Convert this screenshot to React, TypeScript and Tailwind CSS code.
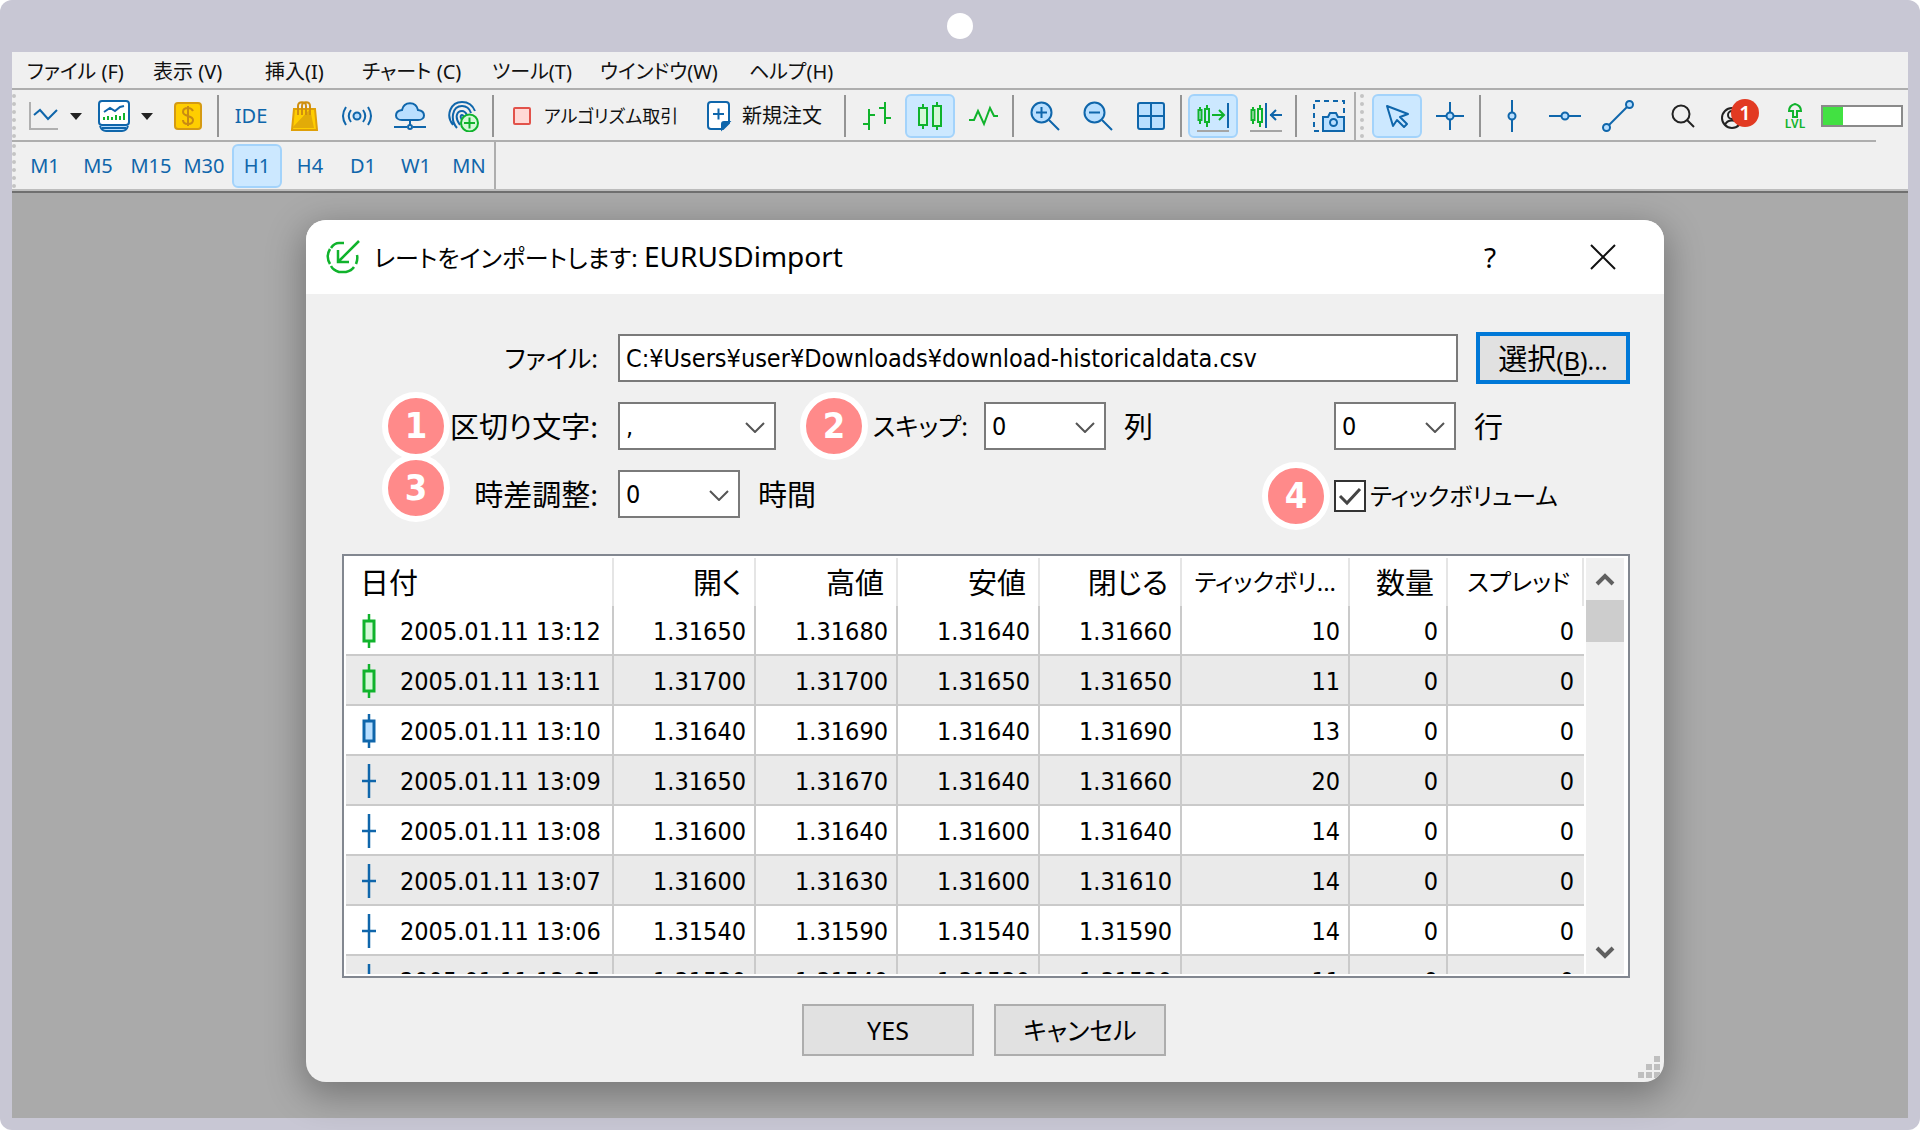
import type { ReactNode } from "react";

const BLUE = "#0f66ab";
const GREEN = "#10b32c";

type Candle = "up" | "down" | "doji";

interface Rate {
    date: string;
    open: string;
    high: string;
    low: string;
    close: string;
    tick: number;
    candle: Candle;
}

const menus = ["ファイル (F)", "表示 (V)", "挿入(I)", "チャート (C)", "ツール(T)", "ウインドウ(W)", "ヘルプ(H)"];

const periods = ["M1", "M5", "M15", "M30", "H1", "H4", "D1", "W1", "MN"];

const rates: Rate[] = [
    { date: "2005.01.11 13:12", open: "1.31650", high: "1.31680", low: "1.31640", close: "1.31660", tick: 10, candle: "up" },
    { date: "2005.01.11 13:11", open: "1.31700", high: "1.31700", low: "1.31650", close: "1.31650", tick: 11, candle: "up" },
    { date: "2005.01.11 13:10", open: "1.31640", high: "1.31690", low: "1.31640", close: "1.31690", tick: 13, candle: "down" },
    { date: "2005.01.11 13:09", open: "1.31650", high: "1.31670", low: "1.31640", close: "1.31660", tick: 20, candle: "doji" },
    { date: "2005.01.11 13:08", open: "1.31600", high: "1.31640", low: "1.31600", close: "1.31640", tick: 14, candle: "doji" },
    { date: "2005.01.11 13:07", open: "1.31600", high: "1.31630", low: "1.31600", close: "1.31610", tick: 14, candle: "doji" },
    { date: "2005.01.11 13:06", open: "1.31540", high: "1.31590", low: "1.31540", close: "1.31590", tick: 14, candle: "doji" },
    { date: "2005.01.11 13:05", open: "1.31530", high: "1.31540", low: "1.31530", close: "1.31530", tick: 11, candle: "doji" },
];

const Icon = ({ children }: { children: ReactNode }) => (
    <svg className="h-8 w-8 shrink-0" viewBox="0 0 32 32" fill="none" stroke={BLUE} strokeWidth="2" aria-hidden="true">
        {children}
    </svg>
);

const ToolButton = ({ label, active, children }: { label: string; active?: boolean; children: ReactNode }) => (
    <button
        type="button"
        aria-label={label}
        className={
            active
                ? "flex h-11 w-[50px] shrink-0 items-center justify-center rounded-md border-2 border-[#a3d3fb] bg-[#cce8ff]"
                : "flex h-11 w-[50px] shrink-0 items-center justify-center"
        }
    >
        {children}
    </button>
);

const Separator = () => <div className="mx-1 h-[42px] w-[2px] shrink-0 bg-[#949494]" />;

const Grip = () => <div className="h-11 w-0 shrink-0 border-l-4 border-dotted border-[#c4c4c4]" />;

const Triangle = () => (
    <svg className="h-[7px] w-3 shrink-0" viewBox="0 0 12 7" fill="#222" aria-hidden="true">
        <path d="M0 0h12L6 7z" />
    </svg>
);

const MiniCandles = () => (
    <g stroke={GREEN}>
        <path d="M3 7v3M3 20v4M10 5v4M10 22v5" />
        <rect x="1.5" y="10" width="3" height="10" />
        <rect x="8" y="9" width="4" height="13" />
    </g>
);

const MenuBar = () => (
    <nav className="grid h-[38px] grid-cols-[126px_112px_97px_130px_108px_149px_auto] items-center border-b-2 border-[#aeaeae] pt-1 pl-[15px] text-xl text-[#111]">
        {menus.map((m) => (
            <a key={m} href="#" className="whitespace-nowrap">
                {m}
            </a>
        ))}
    </nav>
);

const Toolbar = () => (
    <div className="mt-[2px] flex h-12 items-center">
        <Grip />
        <button type="button" aria-label="チャート作成" className="ml-[11px] flex items-center gap-[11px]">
            <Icon>
                <path d="M3 2v27h28" stroke="#b0b0b0" />
                <path d="M7 15l6-5 8 9 9-9" />
            </Icon>
            <Triangle />
        </button>
        <button type="button" aria-label="プロファイル" className="ml-4 flex items-center gap-[11px]">
            <Icon>
                <rect x="1" y="1" width="30" height="24" rx="3" fill="#fff" />
                <path d="M6 12l6-4 5 3 5-4 4-1" />
                <path d="M6 20v-3M10 20v-4M14 20v-3M18 20v-5M22 20v-4M26 20v-7" stroke={GREEN} />
                <path d="M2 26c1 3 3 5 6 5h16c3 0 5-2 6-5" fill="#b9dfff" />
                <path d="M4 28h24" />
            </Icon>
            <Triangle />
        </button>
        <div className="w-[10px]" />
        <ToolButton label="銘柄">
            <Icon>
                <rect x="3" y="3" width="26" height="26" rx="3" fill="#ffce00" stroke="#d59a12" />
                <path d="M21 11c-1-2-3-3-5-3-3 0-5 1-5 4 0 5 10 3 10 8 0 3-2 4-5 4-3 0-5-1-5-4M16 6v20" stroke="#c98b12" />
            </Icon>
        </ToolButton>
        <Separator />
        <div className="flex shrink-0 gap-[3px] pl-[3px]">
            <ToolButton label="IDE">
                <span className="text-xl text-[#0f66ab]">IDE</span>
            </ToolButton>
            <ToolButton label="マーケット">
                <Icon>
                    <path d="M6 9h21l2 21H4z" fill="#ffce00" stroke="#dfa008" />
                    <path d="M22 9l4 19H4z" fill="#e2ab08" stroke="none" />
                    <path d="M10 15V6c0-5 8-5 8 0v9M14 15V6c0-5 8-5 8 0v9" stroke="#cf8f10" />
                </Icon>
            </ToolButton>
            <ToolButton label="シグナル">
                <Icon>
                    <circle cx="16" cy="16" r="3.5" fill="#b9dfff" />
                    <path d="M10 10c-3 4-3 8 0 12M22 10c3 4 3 8 0 12M5 7c-4 6-4 12 0 18M27 7c4 6 4 12 0 18" />
                </Icon>
            </ToolButton>
            <ToolButton label="VPS">
                <Icon>
                    <path d="M8 20c-8 0-8-9 0-10C10 1 22 1 24 10c8 1 8 10 0 10z" fill="#b9dfff" />
                    <path d="M16 20v5M0 27h13M19 27h13" />
                    <circle cx="16" cy="27" r="2" />
                </Icon>
            </ToolButton>
            <ToolButton label="コミュニティ">
                <Icon>
                    <path d="M6 25C-2 15 4 2 15 2c7 0 11 4 13 9M10 28C3 20 5 6 15 6c6 0 8 4 9 7M13 25c-6-8-3-14 2-14 3 0 4 2 5 4" />
                    <path d="M17 22c-4-3-4-7-2-7s1 2 3 3" />
                    <circle cx="22.5" cy="23" r="8.5" fill="#d5f8d8" stroke={GREEN} />
                    <path d="M17 23h11M22.5 17.5v11" stroke={GREEN} />
                </Icon>
            </ToolButton>
        </div>
        <Separator />
        <button type="button" className="flex h-11 w-[196px] shrink-0 items-center gap-[13px] pl-[15px] text-lg whitespace-nowrap text-[#111]">
            <span className="h-[18px] w-[18px] shrink-0 rounded-xs border-2 border-[#e2524a] bg-[#ffd9d6]" />
            アルゴリズム取引
        </button>
        <button type="button" className="flex h-11 w-[146px] shrink-0 items-center gap-[7px] pl-[9px] text-xl whitespace-nowrap text-[#111]">
            <Icon>
                <path d="M8 2h15c2 0 3 1 3 3v18l-6 6H8c-2 0-3-1-3-3V5c0-2 1-3 3-3z" fill="#fff" />
                <path d="M26 22l-7 7v-5c0-1 1-2 2-2z" fill={BLUE} />
                <path d="M10 14h11M15.5 8.5v11" />
            </Icon>
            新規注文
        </button>
        <Separator />
        <div className="flex shrink-0 gap-[3px] pl-[2px]">
            <ToolButton label="バーチャート">
                <Icon>
                    <path d="M2 24h6M8 9v21M8 15h6M18 8h6M24 2v22M24 18h6" stroke={GREEN} />
                </Icon>
            </ToolButton>
            <ToolButton label="ローソク足" active>
                <Icon>
                    <g stroke={GREEN} fill="#d5f8d8">
                        <path d="M9 4v4M9 24v5M23 2v4M23 26v4" />
                        <rect x="5" y="8" width="8" height="17" />
                        <rect x="19" y="6" width="8" height="20" />
                    </g>
                </Icon>
            </ToolButton>
            <ToolButton label="ラインチャート">
                <Icon>
                    <path d="M2 20h5l4-9 6 13 6-16 4 8h4" stroke={GREEN} />
                </Icon>
            </ToolButton>
        </div>
        <Separator />
        <div className="flex shrink-0 gap-[3px] pl-[2px]">
            <ToolButton label="ズームイン">
                <Icon>
                    <circle cx="12.5" cy="12.5" r="10" fill="#b9dfff" />
                    <path d="M20 20l10 10M7 12.5h11M12.5 7v11" />
                </Icon>
            </ToolButton>
            <ToolButton label="ズームアウト">
                <Icon>
                    <circle cx="12.5" cy="12.5" r="10" fill="#b9dfff" />
                    <path d="M20 20l10 10M7 12.5h11" />
                </Icon>
            </ToolButton>
            <ToolButton label="ウィンドウの整列">
                <Icon>
                    <rect x="3" y="3" width="26" height="26" rx="2" fill="#b9dfff" />
                    <path d="M16 3v26M3 16h26" />
                </Icon>
            </ToolButton>
        </div>
        <Separator />
        <div className="flex shrink-0 gap-[3px] pl-[2px]">
            <ToolButton label="自動スクロール" active>
                <Icon>
                    <MiniCandles />
                    <path d="M15 15h12M22 10l5 5-5 5" stroke={GREEN} />
                    <path d="M31 3v25" />
                    <path d="M0 31h32" stroke="#a5a5a5" />
                </Icon>
            </ToolButton>
            <ToolButton label="チャートシフト">
                <Icon>
                    <MiniCandles />
                    <path d="M16 3v25M20 15h12M26 10l-5 5 5 5" />
                    <path d="M0 31h32" stroke="#a5a5a5" />
                </Icon>
            </ToolButton>
        </div>
        <Separator />
        <div className="flex shrink-0 pl-[3px]">
            <ToolButton label="スクリーンショット">
                <Icon>
                    <path d="M6 31H1V1h30v13" strokeDasharray="5 4" />
                    <path d="M10 17h5l2-4h6l2 4h6v14H10z" fill="#b9dfff" />
                    <circle cx="20.5" cy="22.5" r="3.5" />
                </Icon>
            </ToolButton>
        </div>
        <div className="h-12 w-[2px] shrink-0 bg-[#aeaeae]" />
        <div className="mx-1 flex">
            <Grip />
        </div>
        <div className="flex shrink-0 gap-[3px] pl-1">
            <ToolButton label="カーソル" active>
                <Icon>
                    <path d="M6 6l6 20 4-6 7 7 3-3-7-7 8-3z" fill="#cce8ff" strokeLinejoin="round" />
                </Icon>
            </ToolButton>
            <ToolButton label="十字カーソル">
                <Icon>
                    <path d="M2 16h10M20 16h10M16 2v10M16 20v10" />
                    <circle cx="16" cy="16" r="3.5" fill="#b9dfff" />
                </Icon>
            </ToolButton>
        </div>
        <Separator />
        <div className="flex shrink-0 gap-[3px] pl-[2px]">
            <ToolButton label="垂直線">
                <Icon>
                    <path d="M16 0v12M16 20v12" />
                    <circle cx="16" cy="16" r="3.5" fill="#b9dfff" />
                </Icon>
            </ToolButton>
            <ToolButton label="水平線">
                <Icon>
                    <path d="M0 16h12M20 16h12" />
                    <circle cx="16" cy="16" r="3.5" fill="#b9dfff" />
                </Icon>
            </ToolButton>
            <ToolButton label="トレンドライン">
                <Icon>
                    <path d="M7 25L25 7" />
                    <circle cx="4.5" cy="27.5" r="3.5" fill="#b9dfff" />
                    <circle cx="27.5" cy="4.5" r="3.5" fill="#b9dfff" />
                </Icon>
            </ToolButton>
        </div>
        <div className="ml-auto flex shrink-0 items-center pr-[5px]">
            <button type="button" aria-label="検索">
                <svg className="h-6 w-6" viewBox="0 0 24 24" fill="none" stroke="#222" strokeWidth="2" aria-hidden="true">
                    <circle cx="10" cy="10" r="8.5" />
                    <path d="M16 16l7 7" />
                </svg>
            </button>
            <button type="button" aria-label="アカウント" className="relative ml-6 h-8 w-10">
                <svg className="mt-1 h-6 w-6" viewBox="0 0 24 24" fill="none" stroke="#222" strokeWidth="2" aria-hidden="true">
                    <circle cx="13" cy="12" r="10" />
                    <circle cx="13" cy="9" r="4" />
                    <path d="M6 19c2-6 12-6 14 0" />
                </svg>
                <span className="absolute -top-px right-0 flex h-7 w-7 items-center justify-center rounded-full bg-[#e23a22] text-xl leading-none font-semibold text-white">
                    1
                </span>
            </button>
            <div className="ml-6 flex w-6 flex-col items-center text-xs leading-3 font-semibold text-[#10b32c]">
                <svg className="h-[15px] w-4" viewBox="0 0 16 15" fill="none" stroke={GREEN} strokeWidth="2" aria-hidden="true">
                    <path d="M6 14V8H2c0-3 2-6 6-7 4 1 6 4 6 7h-4v6z" />
                </svg>
                LVL
            </div>
            <div className="ml-[14px] h-[22px] w-[82px] border-2 border-[#8a8a8a] bg-white">
                <div className="h-full w-1/4 bg-[#42e142]" />
            </div>
        </div>
    </div>
);

const PeriodBar = () => (
    <div className="flex h-[47px] items-center">
        <Grip />
        <div className="flex gap-[3px] pt-px pl-1">
            {periods.map((p) => (
                <button
                    key={p}
                    type="button"
                    className={
                        p === "H1"
                            ? "h-11 w-[50px] rounded-md border-2 border-[#a3d3fb] bg-[#cce8ff] text-xl text-[#0f66ab]"
                            : "h-11 w-[50px] text-xl text-[#0f66ab]"
                    }
                >
                    {p}
                </button>
            ))}
        </div>
        <div className="h-full w-[2px] bg-[#aeaeae]" />
    </div>
);

const Marker = ({ n, className }: { n: number; className: string }) => (
    <span
        className={`absolute flex h-[68px] w-[68px] items-center justify-center rounded-full border-[6px] border-white bg-[#ff8a8a] font-['DejaVu_Sans_Condensed'] text-4xl leading-none font-bold text-white ${className}`}
    >
        {n}
    </span>
);

const Select = ({ id, value, wide, label }: { id: string; value: string; wide?: boolean; label?: string }) => (
    <div className={wide ? "relative w-[158px] shrink-0" : "relative w-[122px] shrink-0"}>
        <select
            id={id}
            aria-label={label}
            className="block h-12 w-full appearance-none border-2 border-[#7a7a7a] bg-white px-[6px] font-['DejaVu_Sans_Condensed'] text-[25px]"
        >
            <option>{value}</option>
        </select>
        <svg
            className="pointer-events-none absolute top-5 right-[11px] h-[11px] w-5"
            viewBox="0 0 20 11"
            fill="none"
            stroke="#555"
            strokeWidth="2"
            aria-hidden="true"
        >
            <path d="M1 1l9 9 9-9" />
        </svg>
    </div>
);

const ImportForm = () => (
    <div className="flex flex-col gap-5">
        <div className="flex h-12 items-center">
            <label htmlFor="file" className="w-64 shrink-0 text-right text-[25px]">
                ファイル:
            </label>
            <input
                id="file"
                type="text"
                defaultValue="C:¥Users¥user¥Downloads¥download-historicaldata.csv"
                className="ml-5 h-12 min-w-0 flex-1 border-2 border-[#7a7a7a] bg-white px-[6px] font-['DejaVu_Sans_Condensed','Noto_Sans_CJK_JP',sans-serif] text-[25px]"
            />
            <button type="button" className="ml-[18px] h-[52px] w-[154px] shrink-0 border-4 border-[#0078d7] bg-[#e1e1e1]">
                選択
                <span className="text-[25px]">
                    (<u className="underline-offset-4">B</u>)...
                </span>
            </button>
        </div>

        <div className="relative flex h-12 items-center">
            <Marker n={1} className="-top-[10px] left-10" />
            <label htmlFor="delimiter" className="w-64 shrink-0 text-right">
                区切り文字:
            </label>
            <div className="ml-5">
                <Select id="delimiter" value="," wide />
            </div>
            <div className="relative ml-6 flex h-12 w-[168px] items-center justify-end">
                <Marker n={2} className="-top-[10px] left-0" />
                <label htmlFor="skip-columns" className="text-[25px]">
                    スキップ:
                </label>
            </div>
            <div className="ml-4 flex items-center gap-[18px]">
                <Select id="skip-columns" value="0" />
                <span>列</span>
            </div>
            <div className="ml-auto flex w-[296px] items-center gap-[18px]">
                <Select id="skip-rows" value="0" label="スキップ 行" />
                <span>行</span>
            </div>
        </div>

        <div className="relative flex h-12 items-center">
            <Marker n={3} className="-top-4 left-10" />
            <label htmlFor="shift" className="w-64 shrink-0 text-right">
                時差調整:
            </label>
            <div className="ml-5 flex items-center gap-[18px]">
                <Select id="shift" value="0" />
                <span>時間</span>
            </div>
            <div className="relative ml-auto flex h-12 w-[296px] items-center gap-1 pt-1">
                <Marker n={4} className="-top-2 right-full mr-1" />
                <span className="relative h-8 w-8 shrink-0">
                    <input id="tick-volume" type="checkbox" defaultChecked className="block h-8 w-8 appearance-none border-2 border-[#333] bg-white" />
                    <svg
                        className="pointer-events-none absolute top-0 left-0 h-8 w-8"
                        viewBox="0 0 32 32"
                        fill="none"
                        stroke="#444"
                        strokeWidth="3"
                        aria-hidden="true"
                    >
                        <path d="M6 16l7 7L26 9" />
                    </svg>
                </span>
                <label htmlFor="tick-volume" className="text-2xl whitespace-nowrap">
                    ティックボリューム
                </label>
            </div>
        </div>
    </div>
);

const CandleIcon = ({ type }: { type: Candle }) => {
    const color = type === "up" ? GREEN : BLUE;
    return (
        <svg className="h-[34px] w-[14px]" viewBox="0 0 14 34" stroke={color} strokeWidth="2.5" fill={type === "up" ? "#d5f8d8" : "#b9dfff"} aria-hidden="true">
            <path d="M7 0v34" />
            {type === "doji" ? <path d="M0 17h14" /> : <rect x="2" y="7" width="10" height="20" strokeWidth="3" />}
        </svg>
    );
};

const RateTable = () => (
    <div className="mt-9 flex h-[424px] border-2 border-[#828790] bg-white p-[2px]">
        <div className="min-w-0 flex-1 overflow-hidden">
            <table className="w-full table-fixed border-separate border-spacing-0">
                <colgroup>
                    <col />
                    <col className="w-[142px]" />
                    <col className="w-[142px]" />
                    <col className="w-[142px]" />
                    <col className="w-[142px]" />
                    <col className="w-[168px]" />
                    <col className="w-[98px]" />
                    <col className="w-[136px]" />
                </colgroup>
                <thead>
                    <tr className="h-12 text-right [&>th]:border-r-2 [&>th]:border-[#e5e5e5] [&>th]:pr-3 [&>th]:font-normal [&>th]:whitespace-nowrap">
                        <th className="pl-[14px] text-left">日付</th>
                        <th>開く</th>
                        <th>高値</th>
                        <th>安値</th>
                        <th>閉じる</th>
                        <th className="text-2xl">ティックボリ...</th>
                        <th>数量</th>
                        <th className="text-2xl">スプレッド</th>
                    </tr>
                </thead>
                <tbody className="font-['DejaVu_Sans_Condensed'] text-[25px] leading-none">
                    {rates.map((r) => (
                        <tr
                            key={r.date}
                            className="h-[50px] text-right even:bg-[#eaeaea] [&>td]:border-r-2 [&>td]:border-b-2 [&>td]:border-[#cacaca] [&>td]:px-2 [&>td]:pt-[2px] [&>td:last-child]:border-r-0 [&>td:last-child]:pr-[10px]"
                        >
                            <td>
                                <div className="flex items-center gap-6 pl-2 whitespace-nowrap">
                                    <CandleIcon type={r.candle} />
                                    {r.date}
                                </div>
                            </td>
                            <td>{r.open}</td>
                            <td>{r.high}</td>
                            <td>{r.low}</td>
                            <td>{r.close}</td>
                            <td>{r.tick}</td>
                            <td>0</td>
                            <td>0</td>
                        </tr>
                    ))}
                </tbody>
            </table>
        </div>
        {/* scrollbar */}
        <div className="mx-[2px] flex w-[38px] flex-col items-center bg-[#f0f0f0]">
            <button type="button" aria-label="上へスクロール" className="flex h-[42px] w-full shrink-0 items-center justify-center">
                <svg className="h-4 w-5" viewBox="0 0 20 16" fill="none" stroke="#606060" strokeWidth="4" aria-hidden="true">
                    <path d="M2 13l8-8 8 8" />
                </svg>
            </button>
            <div className="h-[42px] w-full bg-[#cdcdcd]" />
            <button type="button" aria-label="下へスクロール" className="mt-auto flex h-[42px] w-full shrink-0 items-center justify-center">
                <svg className="h-4 w-5" viewBox="0 0 20 16" fill="none" stroke="#606060" strokeWidth="4" aria-hidden="true">
                    <path d="M2 3l8 8 8-8" />
                </svg>
            </button>
        </div>
    </div>
);

const ImportDialog = () => (
    <section
        role="dialog"
        aria-labelledby="dialog-title"
        className="relative overflow-hidden rounded-[20px] bg-[#f0f0f0] shadow-[0_10px_36px_4px_rgba(0,0,0,0.3)]"
    >
        <header className="flex h-[74px] items-center bg-white pl-5">
            <svg className="h-9 w-9 shrink-0" viewBox="0 0 36 36" fill="none" stroke={GREEN} strokeWidth="2.5" aria-hidden="true">
                <path d="M33 2L13 22M12 11v12h11" />
                <path d="M18 4h-5c-3 0-6 2-8 5M4 10c-3 5-3 10 0 15M5 27c2 4 5 5 8 6h7c4-1 6-2 8-5M30 25c1-3 2-5 1-9" />
            </svg>
            <h1 id="dialog-title" className="ml-3 text-2xl">
                レートをインポートします: <span className="text-[28px]">EURUSDimport</span>
            </h1>
            <button type="button" aria-label="ヘルプ" className="ml-auto w-10 text-[28px]">
                ?
            </button>
            <button type="button" aria-label="閉じる" className="mr-12 ml-20">
                <svg className="h-[26px] w-[26px]" viewBox="0 0 26 26" fill="none" stroke="#111" strokeWidth="2" aria-hidden="true">
                    <path d="M1 1l24 24M25 1L1 25" />
                </svg>
            </button>
        </header>
        <div className="pt-10 pr-[34px] pb-[26px] pl-9 text-[29px] leading-none">
            <ImportForm />
            <RateTable />
            <div className="mt-[26px] flex justify-center gap-5 pr-1 text-[25px] leading-none">
                <button type="button" className="h-[52px] w-[172px] border-2 border-[#adadad] bg-[#e1e1e1]">
                    YES
                </button>
                <button type="button" className="h-[52px] w-[172px] border-2 border-[#adadad] bg-[#e1e1e1]">
                    キャンセル
                </button>
            </div>
        </div>
        <svg className="absolute right-1 bottom-1 h-[22px] w-[22px]" viewBox="0 0 22 22" fill="#bfbfbf" aria-hidden="true">
            <path d="M16 0h6v6h-6zM8 8h6v6H8zM16 8h6v6h-6zM0 16h6v6H0zM8 16h6v6H8zM16 16h6v6h-6z" />
        </svg>
    </section>
);

const App = () => {
    return (
        <div className="bg-white">
            <div className="flex min-h-screen flex-col rounded-xl bg-[#c8c7d4] px-3 pb-3 font-['Noto_Sans','Noto_Sans_CJK_JP',sans-serif] text-black [font-feature-settings:'palt']">
                <div className="flex h-[52px] items-center justify-center">
                    <div className="h-[26px] w-[26px] rounded-full bg-white" />
                </div>
                <div className="border-b-2 border-[#707070] bg-[#f0f0f0]">
                    <MenuBar />
                    <Toolbar />
                    <div className="mr-8 h-[2px] bg-[#aeaeae]" />
                    <PeriodBar />
                    <div className="h-[2px] bg-[#bdbdbd]" />
                </div>
                <main className="flex-1 bg-[#aaaaaa] pt-[27px] pr-[244px] pb-9 pl-[294px]">
                    <ImportDialog />
                </main>
            </div>
        </div>
    );
};

export default App;
